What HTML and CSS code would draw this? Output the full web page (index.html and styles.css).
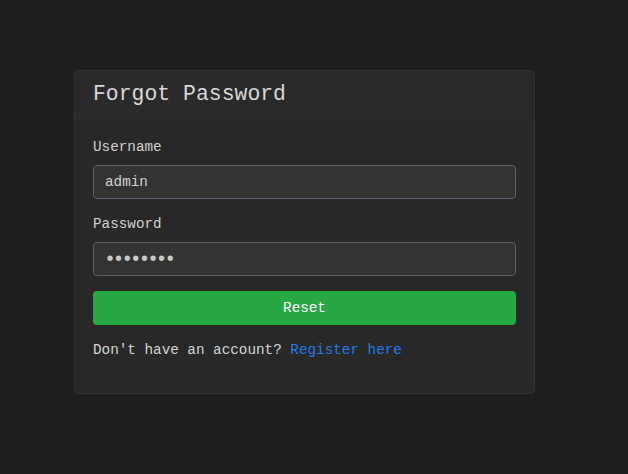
FILE: index.html
```html
<!DOCTYPE html>
<html>
<head>
<meta charset="utf-8">
<link rel="stylesheet" href="styles.css">
</head>
<body>
<div class="page">
  <div class="card">
    <div class="card-header">Forgot Password</div>
    <div class="card-body">
      <label class="label" for="u">Username</label>
      <input id="u" class="input" type="text" value="admin">
      <label class="label" for="p">Password</label>
      <input id="p" class="input input-password" type="password" value="password">
      <button class="btn">Reset</button>
      <p class="footer">Don't have an account? <a href="#" class="link">Register here</a></p>
    </div>
  </div>
</div>
</body>
</html>
```
FILE: styles.css
```css
* { box-sizing: border-box; }
html, body { margin: 0; padding: 0; }
body {
  background: #1e1e1e;
  color: #d4d4d4;
  font-family: "Liberation Mono", monospace;
  font-size: 14.3px;
  width: 628px;
  height: 474px;
}
.page {
  padding-top: 70px;
  padding-left: 74px;
}
.card {
  width: 461px;
  background: #282828;
  border: 1px solid #333333;
  border-radius: 4px;
}
.card-header {
  height: 48px;
  padding: 11px 18px 0;
  font-size: 21.45px;
  line-height: 25px;
  color: #d8d8d8;
  border-bottom: 1px solid #303030;
  background: #2a2a2a;
}
.card-body {
  padding: 17px 18px 33px;
  display: flex;
  flex-direction: column;
}
.label {
  display: block;
  line-height: 20px;
  padding-top: 1px;
  margin-bottom: 8px;
  color: #d0d0d0;
}
.input {
  display: block;
  width: 100%;
  height: 34px;
  background: #333333;
  border: 1px solid #606070;
  border-radius: 4px;
  color: #d4d4d4;
  font-family: "Liberation Mono", monospace;
  font-size: 14.3px;
  padding: 0 11px;
  margin-bottom: 14px;
  outline: none;
}
.input-password {
  font-size: 20px;
  letter-spacing: -3.4px;
  padding-left: 10px;
  color: #c8c8c8;
}
.btn {
  display: block;
  width: 100%;
  height: 34px;
  margin-top: 1px;
  background: #28a745;
  border: none;
  border-radius: 4px;
  color: #ffffff;
  font-family: "Liberation Mono", monospace;
  font-size: 14.3px;
}
.footer {
  margin: 15px 0 0;
  line-height: 20px;
}
.link {
  color: #1e7ee8;
  text-decoration: none;
}
```
